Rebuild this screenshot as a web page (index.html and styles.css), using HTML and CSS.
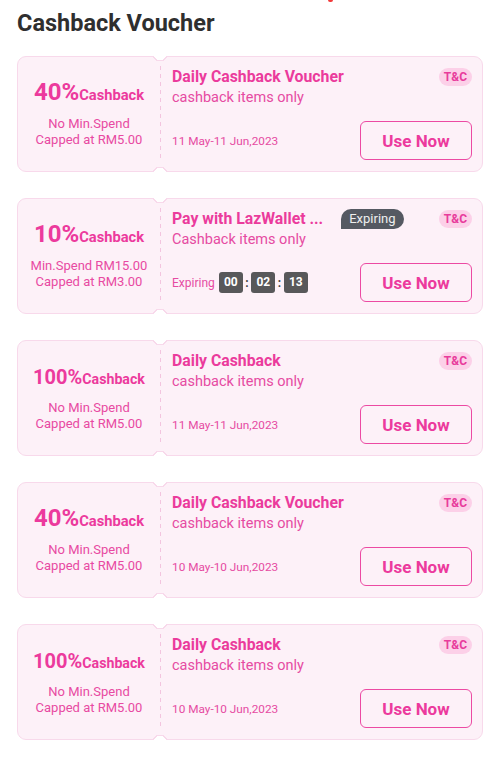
FILE: index.html
```html
<!DOCTYPE html>
<html>
<head>
<meta charset="utf-8">
<link rel="stylesheet" href="styles.css">
</head>
<body>
<div class="topmark"></div>
<h1 class="page-title">Cashback Voucher</h1>
<div class="list">
  <div class="card">
    <div class="left">
      <div class="amount"><span class="pct">40%</span><span class="cb">Cashback</span></div>
      <div class="cond">No Min.Spend<br>Capped at RM5.00</div>
    </div>
    <div class="divider"></div>
    <div class="right">
      <div class="row-top"><span class="title">Daily Cashback Voucher</span><span class="tc">T&amp;C</span></div>
      <div class="sub">cashback items only</div>
      <div class="row-bottom"><span class="date">11 May-11 Jun,2023</span><button class="use">Use Now</button></div>
    </div>
  </div>

  <div class="card">
    <div class="left">
      <div class="amount"><span class="pct">10%</span><span class="cb">Cashback</span></div>
      <div class="cond">Min.Spend RM15.00<br>Capped at RM3.00</div>
    </div>
    <div class="divider"></div>
    <div class="right">
      <div class="row-top"><span class="title">Pay with LazWallet ...</span><span class="exp-badge">Expiring</span><span class="tc">T&amp;C</span></div>
      <div class="sub">Cashback items only</div>
      <div class="row-bottom">
        <div class="timer"><span class="exp-label">Expiring</span><span class="tbox">00</span><span class="colon">:</span><span class="tbox">02</span><span class="colon">:</span><span class="tbox">13</span></div>
        <button class="use">Use Now</button>
      </div>
    </div>
  </div>

  <div class="card">
    <div class="left">
      <div class="amount amount-sm"><span class="pct">100%</span><span class="cb">Cashback</span></div>
      <div class="cond">No Min.Spend<br>Capped at RM5.00</div>
    </div>
    <div class="divider"></div>
    <div class="right">
      <div class="row-top"><span class="title">Daily Cashback</span><span class="tc">T&amp;C</span></div>
      <div class="sub">cashback items only</div>
      <div class="row-bottom"><span class="date">11 May-11 Jun,2023</span><button class="use">Use Now</button></div>
    </div>
  </div>

  <div class="card">
    <div class="left">
      <div class="amount"><span class="pct">40%</span><span class="cb">Cashback</span></div>
      <div class="cond">No Min.Spend<br>Capped at RM5.00</div>
    </div>
    <div class="divider"></div>
    <div class="right">
      <div class="row-top"><span class="title">Daily Cashback Voucher</span><span class="tc">T&amp;C</span></div>
      <div class="sub">cashback items only</div>
      <div class="row-bottom"><span class="date">10 May-10 Jun,2023</span><button class="use">Use Now</button></div>
    </div>
  </div>

  <div class="card">
    <div class="left">
      <div class="amount amount-sm"><span class="pct">100%</span><span class="cb">Cashback</span></div>
      <div class="cond">No Min.Spend<br>Capped at RM5.00</div>
    </div>
    <div class="divider"></div>
    <div class="right">
      <div class="row-top"><span class="title">Daily Cashback</span><span class="tc">T&amp;C</span></div>
      <div class="sub">cashback items only</div>
      <div class="row-bottom"><span class="date">10 May-10 Jun,2023</span><button class="use">Use Now</button></div>
    </div>
  </div>
</div>
</body>
</html>
```

FILE: styles.css
```css
* { box-sizing: border-box; }
html, body { margin: 0; padding: 0; background: #fff; }
body { font-family: Roboto, "Noto Sans", Arial, sans-serif; color: #333; }

.topmark {
  margin-left: 328px;
  width: 5px;
  height: 2px;
  background: #f23a3a;
  border-radius: 0 0 2px 2px;
}

.page-title {
  margin: 6px 0 0 17px;
  font-size: 23.5px;
  line-height: 30px;
  font-weight: 700;
  color: #2f2f2f;
}

.list {
  padding: 18px 17px 0 17px;
  display: flex;
  flex-direction: column;
  gap: 26px;
}

.card {
  position: relative;
  display: flex;
  height: 116px;
  background: #fdf1f8;
  border: 1px solid #f8d9eb;
  border-radius: 9px;
}
.card::before, .card::after {
  content: "";
  position: absolute;
  left: 134px;
  width: 16px;
  height: 8px;
}
.card::before {
  top: -1px;
  background: radial-gradient(circle at 8px -2px, #fff 0 6.3px, #f8d9eb 6.3px 7.4px, transparent 7.4px);
}
.card::after {
  bottom: -1px;
  background: radial-gradient(circle at 8px 10px, #fff 0 6.3px, #f8d9eb 6.3px 7.4px, transparent 7.4px);
}

.left {
  width: 142px;
  flex: none;
  display: flex;
  flex-direction: column;
  align-items: center;
  justify-content: center;
  color: #ea3d9e;
  padding-bottom: 1px;
}
.amount {
  line-height: 26px;
  white-space: nowrap;
}
.pct { font-size: 24px; font-weight: 700; color: #ec3a9d; }
.cb { font-size: 14.7px; font-weight: 700; color: #ec3a9d; }
.amount-sm .pct { font-size: 20px; }
.amount-sm .cb { font-size: 14.2px; }
.cond {
  margin-top: 8px;
  font-size: 13px;
  line-height: 16px;
  text-align: center;
  color: #e84aa2;
}

.divider {
  width: 1px;
  flex: none;
  margin: 9px 0;
  background: repeating-linear-gradient(to bottom, #f3c5df 0 4px, transparent 4px 8px);
}

.right {
  flex: 1;
  display: flex;
  flex-direction: column;
  padding: 9px 10px 11px 11px;
}
.row-top {
  display: flex;
  align-items: center;
  height: 21px;
}
.title {
  font-size: 15.8px;
  font-weight: 700;
  line-height: 21px;
  color: #eb3b9c;
  white-space: nowrap;
}
.tc {
  margin-left: auto;
  height: 18px;
  line-height: 18px;
  padding: 0 5px;
  border-radius: 9px;
  background: #fcd0e8;
  color: #e83c9c;
  font-size: 12px;
  font-weight: 700;
  margin-top: 1px;
}
.exp-badge {
  margin-left: 18px;
  height: 20px;
  line-height: 20px;
  padding: 0 8px;
  border-radius: 10px 10px 10px 0;
  background: #555962;
  color: #eeeeee;
  font-size: 13px;
}
.sub {
  margin-top: 2px;
  font-size: 14.5px;
  line-height: 18px;
  color: #e64ba2;
}
.row-bottom {
  margin-top: auto;
  display: flex;
  align-items: center;
  justify-content: space-between;
}
.date {
  font-size: 11.8px;
  color: #e64ba2;
}
.use {
  width: 112px;
  height: 39px;
  border: 1.5px solid #ec4aa3;
  border-radius: 6px;
  background: transparent;
  color: #ec3a9d;
  font-family: Roboto, "Noto Sans", Arial, sans-serif;
  font-size: 17px;
  font-weight: 700;
  padding: 0;
}
.timer {
  display: flex;
  align-items: center;
}
.exp-label {
  font-size: 12px;
  color: #e64ba2;
  margin-right: 4px;
}
.tbox {
  width: 24px;
  height: 21px;
  line-height: 21px;
  text-align: center;
  background: #58585a;
  color: #fff;
  font-size: 12px;
  font-weight: 700;
  border-radius: 3px;
}
.colon {
  width: 8.5px;
  text-align: center;
  font-size: 12px;
  font-weight: 700;
  color: #444;
}
```
